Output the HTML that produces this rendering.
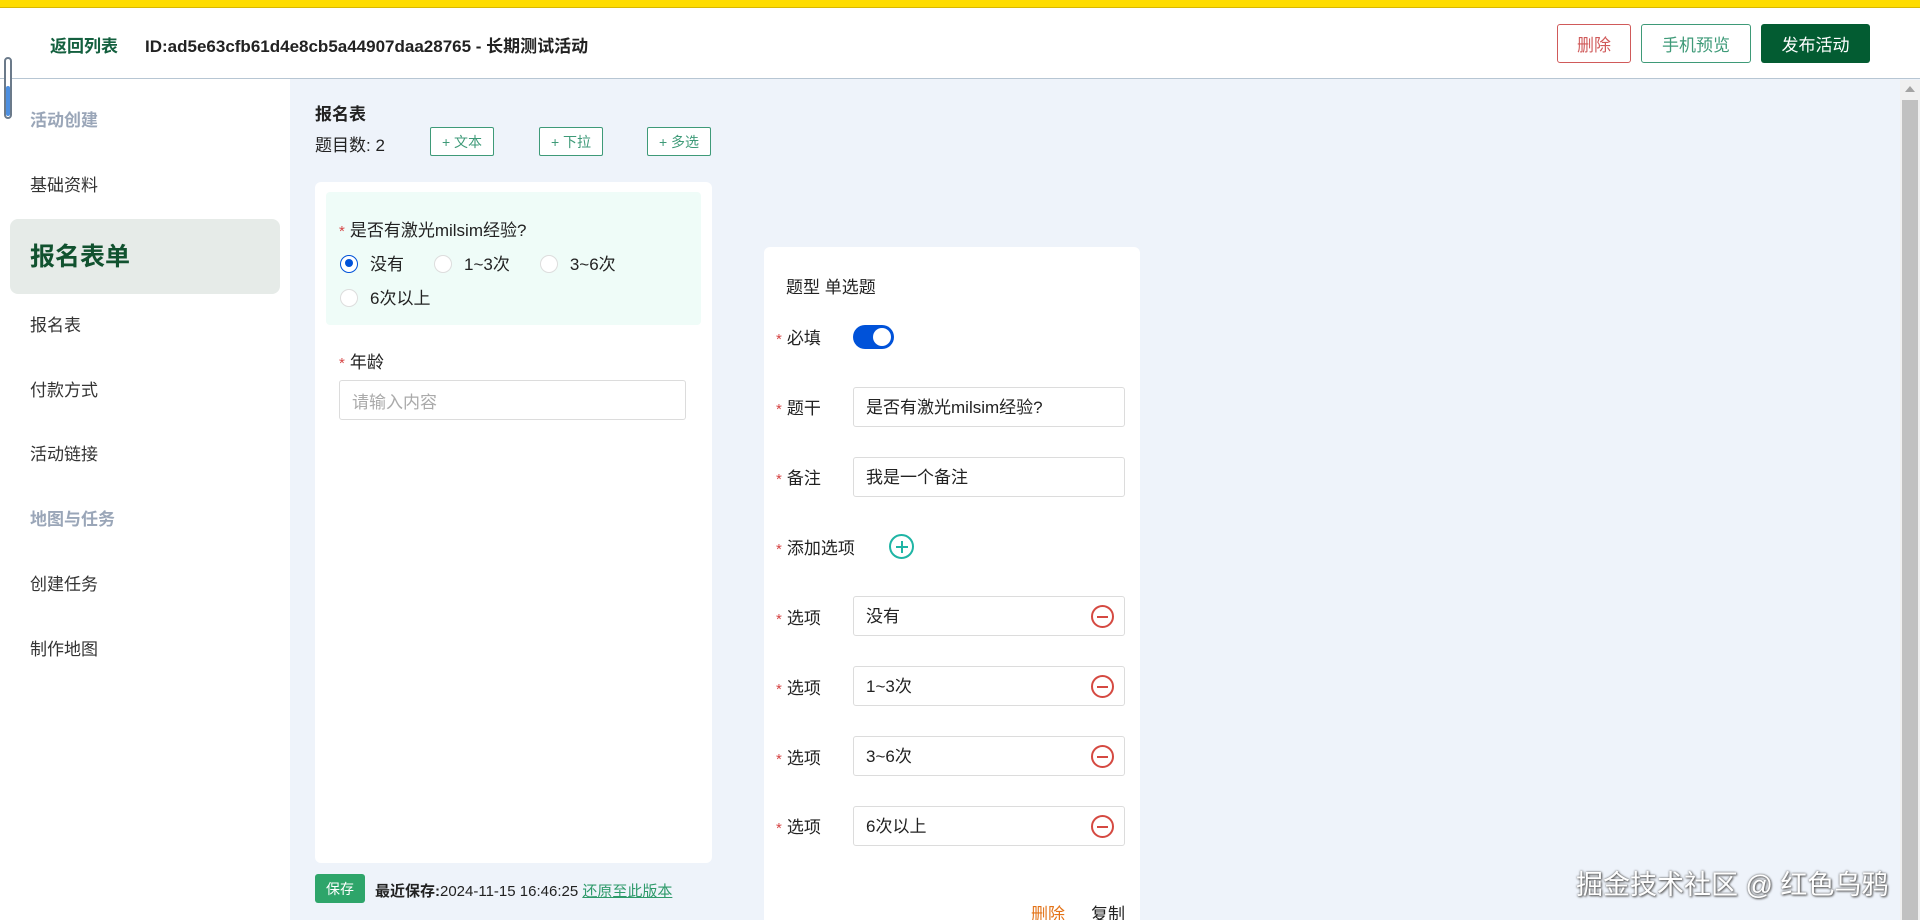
<!DOCTYPE html>
<html style="width:1920px;height:920px;overflow:hidden"><head><meta charset="utf-8"><style>
*{box-sizing:border-box;margin:0;padding:0}
body{width:1920px;height:920px;overflow:hidden;background:#eef3fa;font-family:"Liberation Sans","Noto Sans CJK SC",sans-serif;font-size:17px;color:#222;position:relative}
.abs{position:absolute}
.top{left:0;top:0;width:1920px;height:8px;background:#ffdc00;border-bottom:1px solid #d8b800}
.hdr{left:0;top:8px;width:1920px;height:71px;background:#fff;border-bottom:1px solid #b7c6d3}
.btn{position:absolute;top:24px;height:39px;border-radius:3px;font-size:17px;display:flex;align-items:center;justify-content:center}
.side{left:0;top:79px;width:290px;height:841px;background:#fff}
.si{position:absolute;left:30px;font-size:17px;color:#333;line-height:20px}
.sg{color:#9aa6b8;font-weight:bold}
.card{background:#fff;border-radius:6px}
.ob{position:absolute;height:29px;border:1px solid #3e9a78;border-radius:2px;color:#3e9a78;font-size:14px;display:flex;align-items:center;justify-content:center;background:#fff}
.radio{display:inline-block;width:18px;height:18px;border:1px solid #ddd;border-radius:50%;background:#fff;vertical-align:middle;margin-right:12px;position:relative;top:-2px}
.radio.on{border:1.5px solid #0052d9}
.radio.on:after{content:"";position:absolute;left:3.5px;top:3.5px;width:8px;height:8px;border-radius:50%;background:#0052d9}
.st{color:#d64545;margin-right:5px;font-size:15px}
.lbl{position:absolute;left:776px;font-size:17px;line-height:20px}
.inp{position:absolute;left:853px;width:272px;height:40px;border:1px solid #dcdcdc;border-radius:3px;padding-left:12px;padding-bottom:3px;display:flex;align-items:center;font-size:17px;background:#fff}
.minus{position:absolute;right:10px;top:8px;width:23px;height:23px;border:2px solid #d54941;border-radius:50%}
.minus:after{content:"";position:absolute;left:4px;top:8.5px;width:11px;height:2px;background:#d54941}
</style></head><body>
<div class="abs top"></div>
<div class="abs hdr">
  <div class="abs" style="left:50px;top:24px;font-weight:bold;color:#14603f;font-size:17px">返回列表</div>
  <div class="abs" style="left:145px;top:24px;font-weight:bold;font-size:17px;color:#222">ID:ad5e63cfb61d4e8cb5a44907daa28765 - 长期测试活动</div>
  <div class="btn" style="left:1557px;width:74px;border:1px solid #d05a5a;color:#d05a5a;top:16px">删除</div>
  <div class="btn" style="left:1641px;width:110px;border:1px solid #3e9a78;color:#3e9a78;top:16px">手机预览</div>
  <div class="btn" style="left:1761px;width:109px;background:#035c32;color:#fff;top:16px">发布活动</div>
</div>
<div class="abs side">
  <div class="si sg" style="top:32px">活动创建</div>
  <div class="si" style="top:97px">基础资料</div>
  <div class="abs" style="left:10px;top:140px;width:270px;height:75px;background:#e6ebe8;border-radius:8px"></div>
  <div class="si" style="top:163px;font-size:25px;line-height:30px;font-weight:bold;color:#11522f">报名表单</div>
  <div class="si" style="top:237px">报名表</div>
  <div class="si" style="top:302px">付款方式</div>
  <div class="si" style="top:366px">活动链接</div>
  <div class="si sg" style="top:431px">地图与任务</div>
  <div class="si" style="top:496px">创建任务</div>
  <div class="si" style="top:561px">制作地图</div>
</div>
<div class="abs" style="left:4px;top:57px;width:8px;height:62px;border:2px solid #6b7a8a;border-radius:4px;background:#fff"></div>
<div class="abs" style="left:6px;top:86px;width:4px;height:30px;background:#4d8fe0;border-radius:2px"></div>
<div class="abs" style="left:315px;top:100px;font-weight:bold;font-size:17px">报名表</div>
<div class="abs" style="left:315px;top:131px;font-size:17px">题目数: 2</div>
<div class="ob" style="left:430px;top:127px;width:64px">+ 文本</div>
<div class="ob" style="left:539px;top:127px;width:64px">+ 下拉</div>
<div class="ob" style="left:647px;top:127px;width:64px">+ 多选</div>
<div class="abs card" style="left:315px;top:182px;width:397px;height:681px"></div>
<div class="abs" style="left:326px;top:192px;width:375px;height:133px;background:#effcf8;border-radius:4px"></div>
<div class="abs" style="left:339px;top:216px"><span class="st">*</span>是否有激光milsim经验?</div>
<div class="abs" style="left:340px;top:250px"><span class="radio on"></span>没有<span style="display:inline-block;width:30px"></span><span class="radio"></span>1~3次<span style="display:inline-block;width:30px"></span><span class="radio"></span>3~6次</div>
<div class="abs" style="left:340px;top:284px"><span class="radio"></span>6次以上</div>
<div class="abs" style="left:339px;top:348px"><span class="st">*</span>年龄</div>
<div class="abs" style="left:339px;top:380px;width:347px;height:40px;border:1px solid #dcdcdc;border-radius:3px;padding-left:12px;display:flex;align-items:center;color:#aaa">请输入内容</div>
<div class="abs" style="left:315px;top:874px;width:50px;height:29px;background:#2ea56a;color:#fff;border-radius:3px;font-size:14px;display:flex;align-items:center;justify-content:center">保存</div>
<div class="abs" style="left:375px;top:880px;font-size:15px"><b>最近保存:</b>2024-11-15 16:46:25 <span style="color:#2e9a6a;text-decoration:underline">还原至此版本</span></div>
<div class="abs card" style="left:764px;top:247px;width:376px;height:673px;border-radius:6px 6px 0 0"></div>
<div class="abs" style="left:786px;top:273px">题型 单选题</div>
<div class="lbl" style="top:329px"><span class="st">*</span>必填</div>
<div class="abs" style="left:853px;top:325px;width:41px;height:24px;border-radius:12px;background:#0052d9"><div class="abs" style="right:3px;top:3px;width:18px;height:18px;border-radius:50%;background:#fff"></div></div>
<div class="lbl" style="top:399px"><span class="st">*</span>题干</div>
<div class="inp" style="top:387px">是否有激光milsim经验?</div>
<div class="lbl" style="top:469px"><span class="st">*</span>备注</div>
<div class="inp" style="top:457px">我是一个备注</div>
<div class="lbl" style="top:539px"><span class="st">*</span>添加选项</div>
<div class="abs" style="left:889px;top:534px;width:25px;height:25px;border:2px solid #1fb5a5;border-radius:50%"><div class="abs" style="left:4.5px;top:9.5px;width:12px;height:2px;background:#1fb5a5"></div><div class="abs" style="left:9.5px;top:4.5px;width:2px;height:12px;background:#1fb5a5"></div></div>
<div class="lbl" style="top:609px"><span class="st">*</span>选项</div>
<div class="inp" style="top:596px">没有<div class="minus"></div></div>
<div class="lbl" style="top:679px"><span class="st">*</span>选项</div>
<div class="inp" style="top:666px">1~3次<div class="minus"></div></div>
<div class="lbl" style="top:749px"><span class="st">*</span>选项</div>
<div class="inp" style="top:736px">3~6次<div class="minus"></div></div>
<div class="lbl" style="top:818px"><span class="st">*</span>选项</div>
<div class="inp" style="top:806px">6次以上<div class="minus"></div></div>
<div class="abs" style="left:1031px;top:900px;color:#e37318">删除</div>
<div class="abs" style="left:1091px;top:900px;color:#222">复制</div>
<div class="abs" style="left:1576px;top:863px;font-size:27px;color:#fff;text-shadow:0 0 2px #555,1px 1px 2px #555;white-space:nowrap">掘金技术社区 @ 红色乌鸦</div>
<div class="abs" style="left:1900px;top:80px;width:20px;height:840px;background:#f0f0f0"></div>
<div class="abs" style="left:1905px;top:86px;width:0;height:0;border-left:5px solid transparent;border-right:5px solid transparent;border-bottom:6px solid #a3a3a3"></div>
<div class="abs" style="left:1902px;top:100px;width:16px;height:820px;background:#c1c1c1"></div>
</body></html>
